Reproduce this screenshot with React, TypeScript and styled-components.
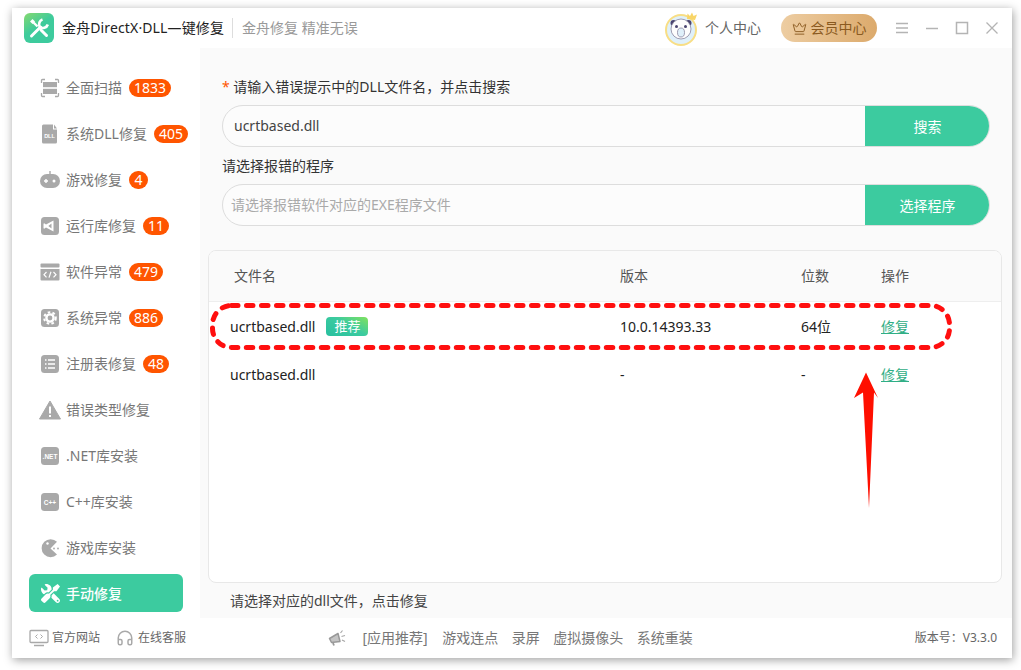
import styled, { createGlobalStyle } from 'styled-components';
import { FaTools } from 'react-icons/fa';
import { LuCrown, LuHeadphones } from 'react-icons/lu';

const GlobalStyle = createGlobalStyle`
    html, body {
        margin: 0;
        padding: 0;
        background: #ffffff;
    }
    * {
        box-sizing: border-box;
    }
    body {
        font-family: "Noto Sans", "Noto Sans CJK SC", sans-serif;
        font-size: 14px;
    }
`;

const Tile = ({ children }: { children: React.ReactNode }) => (
    <svg width="20" height="20" viewBox="0 0 20 20">
        <rect x="1" y="1" width="18" height="18" rx="3.5" fill="#a9a9a9" />
        {children}
    </svg>
);

const TileLabel = ({ text }: { text: string }) => (
    <text x="10" y="12.5" textAnchor="middle" fontSize="6.5" fontWeight="700" fill="#fff" fontFamily="Liberation Sans, sans-serif">{text}</text>
);

const icons: Record<string, React.ReactNode> = {
    scan: (
        <svg width="20" height="20" viewBox="0 0 20 20" fill="none">
            <path d="M5 1.5H2.5a1 1 0 0 0-1 1V5M15 1.5h2.5a1 1 0 0 1 1 1V5M5 18.5H2.5a1 1 0 0 1-1-1V15M15 18.5h2.5a1 1 0 0 0 1-1V15" stroke="#a9a9a9" strokeWidth="1.3" />
            <rect x="3" y="4" width="14" height="5.2" fill="#a9a9a9" />
            <rect x="3" y="10.8" width="14" height="5.2" fill="#a9a9a9" />
        </svg>
    ),
    dll: (
        <svg width="20" height="20" viewBox="0 0 20 20">
            <path d="M3.5 0.5H13V5.5H17V18a1.5 1.5 0 0 1-1.5 1.5h-12A1.5 1.5 0 0 1 2 18V2a1.5 1.5 0 0 1 1.5-1.5Z" fill="#a9a9a9" />
            <path d="M14 0.5 17 4.5H14Z" fill="#a9a9a9" />
            <text x="9.5" y="14" textAnchor="middle" fontSize="5.5" fontWeight="700" fill="#fff" fontFamily="Liberation Sans, sans-serif">DLL</text>
        </svg>
    ),
    game: (
        <svg width="22" height="20" viewBox="0 0 22 20">
            <rect x="10.3" y="1" width="1.4" height="4" fill="#a9a9a9" />
            <rect x="1" y="4" width="20" height="14" rx="7" fill="#a9a9a9" />
            <path d="M5 11h4M7 9v4" stroke="#fff" strokeWidth="1.4" />
            <circle cx="15" cy="11" r="1.5" fill="#fff" />
        </svg>
    ),
    vs: (
        <Tile>
            <path d="M13.5 4.5v11L6 11.5l-1.8 1.3-.7-.5V7.7l.7-.5L6 8.500Z" fill="#fff" />
            <path d="M11.5 7.6 8.3 10l3.2 2.4Z" fill="#a9a9a9" />
        </Tile>
    ),
    code: (
        <svg width="20" height="20" viewBox="0 0 20 20">
            <rect x="0.5" y="1.5" width="19" height="4" rx="1" fill="#a9a9a9" />
            <path d="M0.5 7h19v10.5a1 1 0 0 1-1 1h-17a1 1 0 0 1-1-1Z" fill="#a9a9a9" />
            <path d="M6.500 10 4 12.700l2.500 2.700M13.500 10l2.500 2.700-2.500 2.700M11 9.800l-2 5.800" stroke="#fff" strokeWidth="1.200" fill="none" />
        </svg>
    ),
    gear: (
        <Tile>
            <circle cx="10" cy="10" r="3.600" fill="none" stroke="#fff" strokeWidth="2.400" />
            <circle cx="10" cy="10" r="5.800" fill="none" stroke="#fff" strokeWidth="2" strokeDasharray="2.600 2.260" />
        </Tile>
    ),
    list: (
        <Tile>
            <path d="M5 6h1.500M5 10h1.500M5 14h1.500M8 6h7M8 10h7M8 14h7" stroke="#fff" strokeWidth="1.500" />
        </Tile>
    ),
    warn: (
        <svg width="22" height="20" viewBox="0 0 22 20">
            <path d="M11 1 21.500 19h-21Z" fill="#a9a9a9" stroke="#a9a9a9" strokeLinejoin="round" />
            <rect x="10" y="6.500" width="2" height="7" fill="#fff" />
            <rect x="10" y="15" width="2" height="2" fill="#fff" />
        </svg>
    ),
    net: <Tile><TileLabel text=".NET" /></Tile>,
    cpp: <Tile><TileLabel text="C++" /></Tile>,
    pac: (
        <svg width="20" height="20" viewBox="0 0 20 20">
            <path d="M17 3.800A9 9 0 1 0 17 16.500L10.500 10.500Z" fill="#a9a9a9" />
            <circle cx="7.500" cy="5.500" r="1.200" fill="#fff" />
            <circle cx="14" cy="10.500" r="0.900" fill="#a9a9a9" />
            <circle cx="18" cy="10.500" r="0.900" fill="#a9a9a9" />
        </svg>
    ),
    tools: <FaTools size={19} color="#ffffff" style={{ transform: 'scaleX(-1)' }} />,
};

const menu = [
    { icon: 'scan', text: '全面扫描', badge: '1833' },
    { icon: 'dll', text: '系统DLL修复', badge: '405' },
    { icon: 'game', text: '游戏修复', badge: '4' },
    { icon: 'vs', text: '运行库修复', badge: '11' },
    { icon: 'code', text: '软件异常', badge: '479' },
    { icon: 'gear', text: '系统异常', badge: '886' },
    { icon: 'list', text: '注册表修复', badge: '48' },
    { icon: 'warn', text: '错误类型修复' },
    { icon: 'net', text: '.NET库安装' },
    { icon: 'cpp', text: 'C++库安装' },
    { icon: 'pac', text: '游戏库安装' },
    { icon: 'tools', text: '手动修复', active: true },
];

const promos = ['游戏连点', '录屏', '虚拟摄像头', '系统重装'];

const rows = [
    { name: 'ucrtbased.dll', tag: true, version: '10.0.14393.33', bits: '64位' },
    { name: 'ucrtbased.dll', tag: false, version: '-', bits: '-' },
];

function App() {
    return (
        <Page>
            <GlobalStyle />
            <Window>
                <TitleBar>
                    <Logo>
                        <svg width="22" height="22" viewBox="0 0 22 22" fill="none">
                            <path d="M3.500 19 12.500 10" stroke="#fff" strokeWidth="3" strokeLinecap="round" />
                            <path d="M14.500 2.500A5 5 0 0 0 11.800 9.800 5 5 0 0 0 19.800 7.500" stroke="#fff" strokeWidth="2.600" />
                            <path d="M9.500 9.500 4.500 4.500" stroke="#fff" strokeWidth="2.400" />
                            <path d="M2 4.500 4.500 2 7 4.500 4.500 7Z" fill="#fff" />
                            <path d="M13 13 18.500 18.500" stroke="#fff" strokeWidth="3" strokeLinecap="round" />
                        </svg>
                    </Logo>
                    <AppName>金舟DirectX·DLL—键修复</AppName>
                    <Slogan>金舟修复 精准无误</Slogan>
                    <Avatar>
                        <svg width="36" height="36" viewBox="0 0 36 36">
                            <circle cx="17" cy="20" r="15" fill="#dff0fa" stroke="#f8de85" strokeWidth="2" />
                            <circle cx="9.500" cy="13" r="3" fill="#4a4570" />
                            <circle cx="24.500" cy="13" r="3" fill="#4a4570" />
                            <circle cx="17" cy="19" r="10" fill="#fdfdfd" stroke="#8a86a0" strokeWidth="0.800" />
                            <circle cx="12.500" cy="16.500" r="1.500" fill="#4a4570" />
                            <circle cx="21.500" cy="16.500" r="1.500" fill="#4a4570" />
                            <ellipse cx="17" cy="22.500" rx="3.500" ry="4.500" fill="#dff0fa" stroke="#8a86a0" strokeWidth="0.800" />
                            <path d="M23 9 23.500 3.500 26 6 28 2.500 29.500 6 33 4.500 31 10Z" fill="#f8d568" />
                        </svg>
                    </Avatar>
                    <UserLink>个人中心</UserLink>
                    <VipButton><LuCrown size={15} strokeWidth={1.5} />会员中心</VipButton>
                    <WinControls>
                        <svg width="14" height="14" viewBox="0 0 14 14"><path d="M1 2.500h12M1 7h12M1 11.500h12" stroke="#b4b4b4" strokeWidth="1.500" /></svg>
                        <svg width="14" height="14" viewBox="0 0 14 14"><path d="M1 7.500h12" stroke="#b4b4b4" strokeWidth="1.500" /></svg>
                        <svg width="14" height="14" viewBox="0 0 14 14"><rect x="1.500" y="1.500" width="11" height="11" fill="none" stroke="#b4b4b4" strokeWidth="1.500" /></svg>
                        <svg width="14" height="14" viewBox="0 0 14 14"><path d="M1.500 1.500l11 11M12.500 1.500l-11 11" stroke="#b4b4b4" strokeWidth="1.300" /></svg>
                    </WinControls>
                </TitleBar>
                <Body>
                    <Sidebar>
                        {menu.map((item) => (
                            <NavItem key={item.text} $active={!!item.active}>
                                <NavIcon>{icons[item.icon]}</NavIcon>
                                <span>{item.text}</span>
                                {item.badge && <Badge>{item.badge}</Badge>}
                            </NavItem>
                        ))}
                    </Sidebar>
                    <Main>
                        <Form>
                            <FieldLabel><em>*</em> 请输入错误提示中的DLL文件名&#xFF0C;并点击搜索</FieldLabel>
                            <InputGroup>
                                <TextInput readOnly value="ucrtbased.dll" />
                                <ActionButton>搜索</ActionButton>
                            </InputGroup>
                            <FieldLabel>请选择报错的程序</FieldLabel>
                            <InputGroup>
                                <TextInput readOnly $hint placeholder="请选择报错软件对应的EXE程序文件" />
                                <ActionButton>选择程序</ActionButton>
                            </InputGroup>
                        </Form>
                        <TableCard>
                            <TableHead>
                                <span>文件名</span>
                                <span>版本</span>
                                <span>位数</span>
                                <span>操作</span>
                            </TableHead>
                            {rows.map((row, index) => (
                                <TableRow key={index}>
                                    <NameCell>
                                        {row.name}
                                        {row.tag && <Tag>推荐</Tag>}
                                    </NameCell>
                                    <span>{row.version}</span>
                                    <span>{row.bits}</span>
                                    <FixLink href="#fix">修复</FixLink>
                                </TableRow>
                            ))}
                        </TableCard>
                        <Hint>请选择对应的dll文件&#xFF0C;点击修复</Hint>
                    </Main>
                </Body>
                <Footer>
                    <FooterLeft>
                        <FooterLink>
                            <svg width="20" height="18" viewBox="0 0 20 18" fill="none">
                                <rect x="1" y="1.500" width="18" height="12" rx="1" stroke="#a9a9a9" strokeWidth="1.300" />
                                <path d="M5 16.500h10" stroke="#a9a9a9" strokeWidth="1.500" />
                                <path d="M8.500 5.500 6.500 7.500l2 2M11.500 5.500l2 2-2 2" stroke="#a9a9a9" />
                            </svg>
                            官方网站
                        </FooterLink>
                        <FooterLink>
                            <LuHeadphones size={18} color="#a9a9a9" />
                            在线客服
                        </FooterLink>
                    </FooterLeft>
                    <Promo>
                        <svg width="18" height="18" viewBox="0 0 18 18" fill="none">
                            <path d="M1.500 9.500 10 4.500 12 12.500 3.500 13.500Z" fill="#c4c4c4" stroke="#999999" strokeWidth="1.500" strokeLinejoin="round" />
                            <path d="M5 14l1 2.500" stroke="#999999" strokeWidth="1.800" />
                            <path d="M12.500 4 14.500 1.500M13.500 7.500l3.500-1M14 11l3 1.500" stroke="#a8a8a8" strokeWidth="1.200" />
                        </svg>
                        <PromoTitle>[应用推荐]</PromoTitle>
                        {promos.map((item) => <span key={item}>{item}</span>)}
                    </Promo>
                    <Version>版本号&#xFF1A;V3.3.0</Version>
                </Footer>
                <Markup width="1000" height="650" viewBox="0 0 1000 650">
                    <rect x="200.500" y="297.500" width="737" height="42" rx="19" fill="none" stroke="#ff0f0f" strokeWidth="5" strokeLinecap="round" strokeDasharray="6.500 8.500" />
                    <path d="M854 364.500 866 390 862 384.500 857 500 851 384.500 842 390Z" fill="#ff0f00" />
                </Markup>
            </Window>
        </Page>
    );
}

export default App;

const Page = styled.div`
    width: 1021px;
    height: 670px;
    padding: 8px 9px 12px 12px;
    overflow: hidden;
`;

const Window = styled.div`
    position: relative;
    width: 1000px;
    height: 650px;
    display: flex;
    flex-direction: column;
    background: #ffffff;
    box-shadow: 1px 2px 9px rgba(0, 0, 0, 0.38);
`;

const TitleBar = styled.div`
    height: 40px;
    flex: none;
    display: flex;
    align-items: center;
    padding-left: 12px;
    line-height: 20px;
`;

const Logo = styled.div`
    width: 30px;
    height: 30px;
    border-radius: 6px;
    display: flex;
    align-items: center;
    justify-content: center;
    background: linear-gradient(145deg, #86d96f 0%, #3fcb9b 45%, #3ccb9f 100%);
`;

const AppName = styled.div`
    margin-left: 8px;
    color: #222222;
    letter-spacing: 0.13px;
    white-space: nowrap;
`;

const Slogan = styled.div`
    margin-left: 8px;
    padding-left: 9px;
    border-left: 1px solid #dddddd;
    color: #999999;
    white-space: nowrap;
`;

const Avatar = styled.div`
    margin-left: auto;
    width: 36px;
    height: 36px;
`;

const UserLink = styled.div`
    margin-left: 5px;
    color: #666666;
    white-space: nowrap;
`;

const VipButton = styled.div`
    margin-left: 20px;
    width: 96px;
    height: 28px;
    border-radius: 14px;
    display: flex;
    align-items: center;
    justify-content: center;
    gap: 4px;
    color: #8a5a20;
    background: linear-gradient(90deg, #edcda2 0%, #dcaa6c 100%);
    white-space: nowrap;
`;

const WinControls = styled.div`
    margin-left: 18px;
    margin-right: 13px;
    display: flex;
    align-items: center;
    gap: 16px;
    > svg {
        display: block;
    }
`;

const Body = styled.div`
    flex: 1;
    min-height: 0;
    display: flex;
`;

const Sidebar = styled.div`
    width: 188px;
    flex: none;
    padding: 20px 0 0 17px;
    display: flex;
    flex-direction: column;
    gap: 8px;
`;

const NavItem = styled.div<{ $active: boolean }>`
    width: 154px;
    height: 38px;
    flex: none;
    display: flex;
    align-items: center;
    padding: 1px 0 0 10px;
    border-radius: 6px;
    line-height: 20px;
    white-space: nowrap;
    color: ${({ $active }) => ($active ? '#ffffff' : '#777777')};
    background: ${({ $active }) => ($active ? '#3ccb9f' : 'transparent')};
    font-weight: ${({ $active }) => ($active ? 500 : 400)};
`;

const NavIcon = styled.div`
    width: 22px;
    height: 20px;
    margin-right: 5px;
    flex: none;
    display: flex;
    align-items: center;
    justify-content: center;
`;

const Badge = styled.span`
    flex: none;
    margin-left: 7px;
    height: 18px;
    min-width: 19px;
    padding: 0 5px;
    border-radius: 9px;
    background: #ff5500;
    color: #ffffff;
    font-size: 14px;
    line-height: 18px;
    text-align: center;
`;

const Main = styled.div`
    flex: 1;
    min-width: 0;
    background: #fafafa;
    display: flex;
    flex-direction: column;
`;

const Form = styled.div`
    padding: 29px 22px 0 22px;
    display: flex;
    flex-direction: column;
`;

const FieldLabel = styled.div`
    height: 20px;
    line-height: 20px;
    color: #333333;
    white-space: nowrap;
    margin-bottom: 8px;
    em {
        color: #ff5500;
        font-style: normal;
    }
`;

const InputGroup = styled.div`
    height: 42px;
    display: flex;
    border: 1px solid #dddddd;
    border-radius: 21px;
    overflow: hidden;
    margin-bottom: 9px;
    background: #fcfcfc;
`;

const TextInput = styled.input<{ $hint?: boolean }>`
    flex: 1;
    min-width: 0;
    border: none;
    outline: none;
    background: transparent;
    padding: 0 0 2px ${({ $hint }) => ($hint ? 8 : 11)}px;
    font-family: inherit;
    font-size: 14px;
    color: #444444;
    &::placeholder {
        color: #aaaaaa;
    }
`;

const ActionButton = styled.div`
    width: 125px;
    flex: none;
    margin: -1px -1px -1px 0;
    display: flex;
    align-items: center;
    justify-content: center;
    background: #3ccb9f;
    color: #ffffff;
`;

const TableCard = styled.div`
    margin: 15px 10px 0 8px;
    height: 333px;
    flex: none;
    border: 1px solid #e8e8e8;
    border-radius: 8px;
    background: #ffffff;
    overflow: hidden;
`;

const columns = 'grid-template-columns: 411px 181px 80px 1fr;';

const TableHead = styled.div`
    height: 51px;
    display: grid;
    ${columns}
    align-items: center;
    background: #fafafa;
    border-bottom: 1px solid #eeeeee;
    color: #555555;
    line-height: 20px;
    > span:first-child {
        padding-left: 25px;
    }
`;

const TableRow = styled.div`
    height: 48px;
    padding-top: 1px;
    display: grid;
    ${columns}
    align-items: center;
    color: #222222;
    line-height: 20px;
`;

const NameCell = styled.div`
    padding-left: 21px;
    display: flex;
    align-items: center;
    gap: 11px;
`;

const Tag = styled.span`
    width: 42px;
    height: 19px;
    border-radius: 4px;
    background: linear-gradient(30deg, #27bf9f 0%, #3ccb9f 55%, #82e25c 100%);
    color: #ffffff;
    font-size: 13px;
    line-height: 19px;
    text-align: center;
`;

const FixLink = styled.a`
    color: #2fae85;
    text-decoration: underline;
`;

const Hint = styled.div`
    flex: 1;
    display: flex;
    align-items: center;
    padding: 0 0 1px 30px;
    color: #444444;
    white-space: nowrap;
`;

const Footer = styled.div`
    height: 40px;
    flex: none;
    display: grid;
    grid-template-columns: 299px 1fr auto;
    align-items: center;
    padding: 0 15px 0 17px;
    color: #777777;
    line-height: 20px;
    white-space: nowrap;
`;

const FooterLeft = styled.div`
    display: flex;
    align-items: center;
    gap: 16px;
`;

const FooterLink = styled.div`
    display: flex;
    align-items: center;
    gap: 3px;
    font-size: 12px;
    color: #666666;
    &:last-child {
        gap: 4px;
    }
`;

const Promo = styled.div`
    display: flex;
    align-items: center;
    gap: 13.5px;
    font-size: 14px;
`;

const PromoTitle = styled.span`
    margin: 0 1px 0 3px;
`;

const Version = styled.div`
    font-size: 12px;
    color: #666666;
`;

const Markup = styled.svg`
    position: absolute;
    left: 0;
    top: 0;
    pointer-events: none;
`;
